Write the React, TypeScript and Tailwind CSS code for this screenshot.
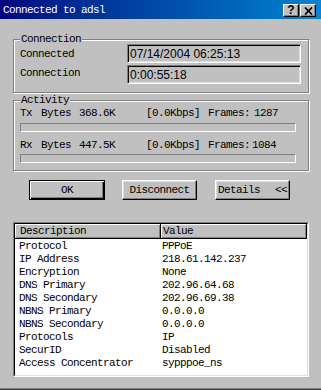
import React from "react";

const MONO = "font-['Liberation_Mono',monospace] text-[11px] tracking-[-0.6px]";

const rows: [string, string][] = [
  ["Protocol", "PPPoE"],
  ["IP Address", "218.61.142.237"],
  ["Encryption", "None"],
  ["DNS Primary", "202.96.64.68"],
  ["DNS Secondary", "202.96.69.38"],
  ["NBNS Primary", "0.0.0.0"],
  ["NBNS Secondary", "0.0.0.0"],
  ["Protocols", "IP"],
  ["SecurID", "Disabled"],
  ["Access Concentrator", "sypppoe_ns"],
];

// sunken edit box, read-only so grey inside
const Field = ({ value }: { value: string }) => (
  <div className="h-[19px] w-[174px] flex items-center pl-[2px] border border-t-[#808080] border-l-[#808080] border-r-white border-b-white shadow-[inset_1px_1px_0_#000,inset_-1px_-1px_0_#dfdfdf] font-['Liberation_Sans',Arial,sans-serif] text-[12px] tracking-normal leading-[12px]">
    {value}
  </div>
);

const Bar = () => (
  <div className="h-[9px] ml-[6px] mr-[12px] border border-t-[#808080] border-l-[#808080] border-r-white border-b-white" />
);

const Group = ({ title, className, children }: { title: string; className: string; children: React.ReactNode }) => (
  <div
    className={
      "relative ml-[13px] w-[296px] border border-[#808080] shadow-[inset_1px_1px_0_#fff,1px_1px_0_#fff] " + className
    }
  >
    <span className="absolute left-[6px] -top-[7px] px-[1px] bg-[#c0c0c0] leading-[12px]">{title}</span>
    {children}
  </div>
);

export default function App() {
  return (
    <div
      className={
        "w-[321px] h-[390px] overflow-hidden flex flex-col bg-[#c0c0c0] text-black leading-[12px] border-b border-[#404040] shadow-[inset_0_-1px_0_#808080] " +
        MONO
      }
    >
      {/* title bar */}
      <div className="h-[19px] shrink-0 flex items-start justify-between bg-linear-to-r from-[#000080] to-[#1084d0] pl-[3px] pr-[5px]">
        <span className="text-white pt-[4px]">Connected to adsl</span>
        <div className="flex mt-[4px]">
          <div className="w-[16px] h-[13px] flex items-center justify-center border border-t-white border-l-white border-r-black border-b-black bg-[#c0c0c0] shadow-[inset_-1px_-1px_0_#808080] font-['Liberation_Sans',Arial,sans-serif] font-bold text-[12px] tracking-normal leading-[11px]">
            ?
          </div>
          <div className="w-[16px] h-[13px] ml-[1px] flex items-center justify-center border border-t-white border-l-white border-r-black border-b-black bg-[#c0c0c0] shadow-[inset_-1px_-1px_0_#808080]">
            <svg width="9" height="8" viewBox="0 0 9 8">
              <path d="M1 0.5 L8 7.5 M8 0.5 L1 7.5" stroke="#000" strokeWidth="1.7" fill="none" />
            </svg>
          </div>
        </div>
      </div>

      {/* connection */}
      <Group title="Connection" className="mt-[20px] pt-[4px] pb-[8px]">
        <div className="flex flex-col gap-[2px] pl-[6px]">
          <div className="flex items-center">
            <span className="w-[107px]">Connected</span>
            <Field value="07/14/2004 06:25:13" />
          </div>
          <div className="flex items-center">
            <span className="w-[107px] -mt-[3px]">Connection</span>
            <Field value="0:00:55:18" />
          </div>
        </div>
      </Group>

      {/* activity */}
      <Group title="Activity" className="mt-[7px] pt-[6px] pb-[7px]">
        <div className="flex pl-[6px] h-[12px] whitespace-pre">
          <span className="w-[21px]">Tx</span>
          <span className="w-[38px]">Bytes</span>
          <span className="w-[67px]">368.6K</span>
          <span className="w-[62px]">[0.0Kbps]</span>
          <span>Frames:</span>
          <span className="ml-[4px]">1287</span>
        </div>
        <div className="mt-[4px]">
          <Bar />
        </div>
        <div className="flex pl-[6px] h-[12px] mt-[7px] whitespace-pre">
          <span className="w-[21px]">Rx</span>
          <span className="w-[38px]">Bytes</span>
          <span className="w-[67px]">447.5K</span>
          <span className="w-[62px]">[0.0Kbps]</span>
          <span>Frames:</span>
          <span className="ml-[2px]">1084</span>
        </div>
        <div className="mt-[3px]">
          <Bar />
        </div>
      </Group>

      {/* buttons */}
      <div className="flex mt-[9px] ml-[29px] h-[20px]">
        <button className="w-[76px] h-full flex items-center justify-center border border-black shadow-[inset_1px_1px_0_#fff,inset_-1px_-1px_0_#000,inset_-2px_-2px_0_#808080]">
          OK
        </button>
        <button className="w-[75px] h-full ml-[17px] flex items-center justify-center border border-t-white border-l-white border-r-black border-b-black shadow-[inset_-1px_-1px_0_#808080,inset_1px_1px_0_#dfdfdf]">
          Disconnect
        </button>
        <button className="w-[75px] h-full ml-[18px] flex items-center justify-between pl-[2px] pr-[2px] border border-t-white border-l-white border-r-black border-b-black shadow-[inset_-1px_-1px_0_#808080,inset_1px_1px_0_#dfdfdf]">
          <span>Details</span>
          <span>&lt;&lt;</span>
        </button>
      </div>

      {/* details list */}
      <div className="mt-[22px] ml-[13px] w-[296px] h-[155px] shrink-0 border border-t-[#808080] border-l-[#808080] border-r-white border-b-white">
        <div className="h-full flex flex-col bg-white border border-t-black border-l-black border-r-[#dfdfdf] border-b-[#dfdfdf]">
          <div className="flex h-[15px] shrink-0 bg-[#c0c0c0]">
            <div className="w-[146px] flex items-center pl-[5px] border-r border-b border-black shadow-[inset_1px_1px_0_#fff,inset_-1px_-1px_0_#808080]">
              Description
            </div>
            <div className="flex-1 flex items-center pl-[2px] border-r border-b border-black shadow-[inset_1px_1px_0_#fff,inset_-1px_-1px_0_#808080]">
              Value
            </div>
          </div>
          {rows.map(([k, v]) => (
            <div key={k} className="flex h-[13px] items-center">
              <span className="w-[147px] pl-[4px]">{k}</span>
              <span>{v}</span>
            </div>
          ))}
        </div>
      </div>
    </div>
  );
}
